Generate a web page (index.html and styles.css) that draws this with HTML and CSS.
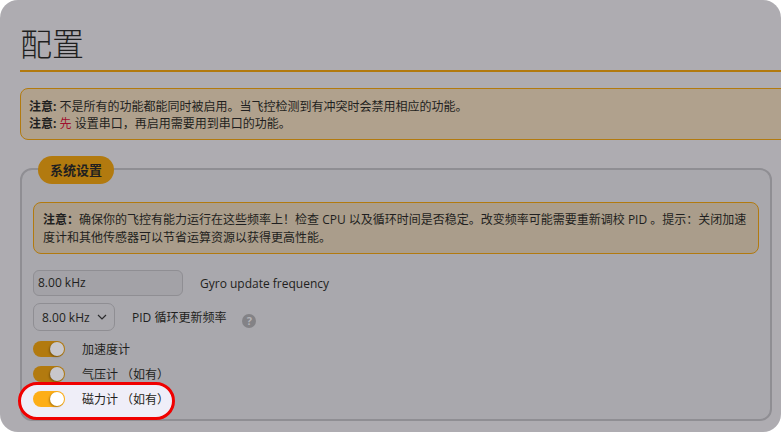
FILE: index.html
```html
<!DOCTYPE html>
<html lang="zh-CN">
<head>
    <meta charset="UTF-8">
    <title>配置</title>
    <link rel="stylesheet" href="styles.css">
</head>
<body>
    <div class="window">
        <h1 class="title">配置</h1>

        <div class="note wide">
            <p><strong>注意:</strong> 不是所有的功能都能同时被启用。当飞控检测到有冲突时会禁用相应的功能。</p>
            <p><strong>注意:</strong> <span class="red">先</span> 设置串口，再启用需要用到串口的功能。</p>
        </div>

        <div class="box">
            <div class="legend">系统设置</div>

            <div class="note inner">
                <p><strong>注意：</strong>确保你的飞控有能力运行在这些频率上！检查 CPU 以及循环时间是否稳定。改变频率可能需要重新调校 PID 。提示：关闭加速<br>度计和其他传感器可以节省运算资源以获得更高性能。</p>
            </div>

            <div class="row gyro-row">
                <div class="readonly">8.00 kHz</div>
                <span class="gyro-label">Gyro update frequency</span>
            </div>

            <div class="row pid-row">
                <div class="select">
                    8.00 kHz
                    <svg width="10" height="6" viewBox="0 0 10 6"><path d="M1 1l4 4 4-4" fill="none" stroke="#2b2b2d" stroke-width="1.2"/></svg>
                </div>
                <span class="pid-label">PID 循环更新频率</span>
                <span class="help">?</span>
            </div>

            <div class="row toggle-row">
                <span class="toggle"><span class="knob"></span></span>
                <span>加速度计</span>
            </div>
            <div class="row toggle-row">
                <span class="toggle"><span class="knob"></span></span>
                <span>气压计 （如有）</span>
            </div>
            <div class="row toggle-row spotlight">
                <span class="toggle"><span class="knob"></span></span>
                <span>磁力计 （如有）</span>
            </div>
        </div>
    </div>
</body>
</html>
```

FILE: styles.css
```css
html, body { margin: 0; padding: 0; background-color: #ffffff; }
body { width: 781px; height: 432px; overflow: hidden; font-family: "Open Sans", "Noto Sans CJK SC", sans-serif; font-size: 12px; color: #1f1f20; }
p { margin: 0; }

.window { box-sizing: border-box; width: 781px; height: 432px; padding: 1px 10px 0 20px; background-color: #aeacb1; border-radius: 18px; overflow: hidden; }

.title { margin: 23px -10px 0 0; height: 46px; border-bottom: 2px solid #b27a0f; font-family: "Noto Sans CJK SC", sans-serif; font-size: 32px; font-weight: 200; line-height: 36px; color: #1f1f20; }

.note { box-sizing: border-box; background-color: #b0a18d; border: 1px solid #b27a0f; border-radius: 8px; line-height: 17px; text-spacing-trim: space-all; }
.note strong { font-weight: 700; }
.red { color: #a0102e; }
.wide { margin: 16px -40px 0 0; height: 52px; padding: 9px 8px 0; }

.box { position: relative; box-sizing: border-box; width: 752px; height: 253px; margin-top: 28px; padding: 32px 11px 0; background-color: #a9a8ad; border: 2px solid #8f8e93; border-radius: 12px; }
.legend { position: absolute; top: -14px; left: 16px; width: 76px; height: 28px; background-color: #b27a0f; border-radius: 14px; font-size: 13px; font-weight: 700; line-height: 28px; text-align: center; }
.inner { height: 52px; padding: 8px 9px; margin-top: 0; background-color: #aa9d8b; line-height: 18px; }

.row { display: flex; align-items: center; }
.gyro-row { margin-top: 16px; }
.readonly { box-sizing: border-box; width: 150px; height: 26px; padding-left: 4px; background-color: #a3a2a7; border: 1px solid #8f8e93; border-radius: 6px; line-height: 24px; }
.gyro-label { margin-left: 17px; }

.pid-row { margin-top: 7px; }
.select { box-sizing: border-box; display: flex; align-items: center; justify-content: space-between; width: 82px; height: 28px; padding: 0 3px 0 8px; background-color: #a9a8ad; border: 1px solid #8f8e93; border-radius: 7px; }
.select svg { margin-right: 4px; }
.pid-label { margin-left: 17px; }
.help { width: 14px; height: 14px; margin-left: 16px; margin-top: 7px; background-color: #838286; border-radius: 50%; color: #b5b4b8; font-size: 11px; font-weight: 700; line-height: 14px; text-align: center; }

.toggle-row { height: 25px; gap: 17px; }
.pid-row + .toggle-row { margin-top: 5px; }
.toggle { position: relative; width: 32px; height: 16px; background-color: #b27a0f; border-radius: 8px; }
.knob { position: absolute; top: 1px; right: 1px; width: 14px; height: 14px; background-color: #c8c7cb; border-radius: 50%; box-shadow: -1px 1px 2px rgba(0, 0, 0, 0.3); }

.spotlight { position: relative; box-sizing: border-box; width: 157px; height: 38px; margin: -4px 0 0 -15px; padding: 0 0 5px 12px; background-color: #efeef8; border: 3px solid #f00000; border-radius: 19px; }
.spotlight .toggle { background-color: #fdae17; }
.spotlight .knob { background-color: #ffffff; }
```
